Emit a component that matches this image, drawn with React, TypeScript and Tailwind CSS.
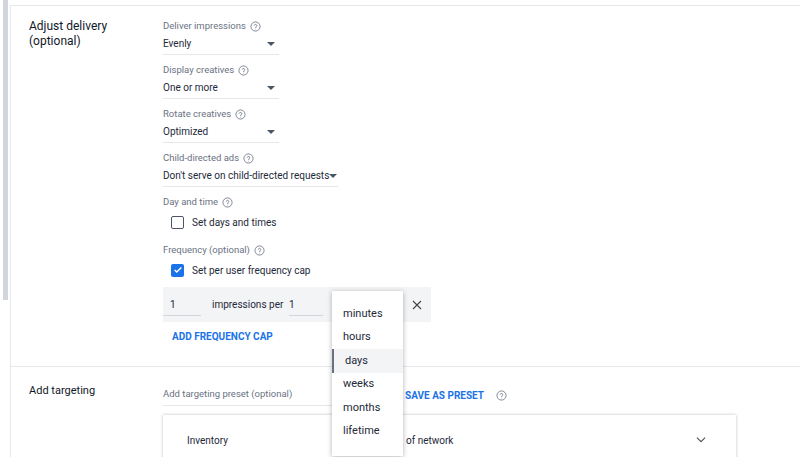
import React from "react";

const Help = () => (
  <svg width="11" height="11" viewBox="0 0 24 24" className="inline-block ml-1 text-gray-500" fill="none" stroke="currentColor" strokeWidth="1.8">
    <circle cx="12" cy="12" r="10" />
    <path d="M9.2 9.3a2.9 2.9 0 0 1 5.6 1c0 1.9-2.8 2.4-2.8 4.2" strokeLinecap="round" />
    <circle cx="12" cy="17.6" r="0.9" fill="currentColor" stroke="none" />
  </svg>
);

const Caret = () => <span className="w-0 h-0 border-l-[4px] border-r-[4px] border-t-[4px] border-l-transparent border-r-transparent border-t-gray-600" />;

const Field = ({ label, value, w }: { label: string; value: string; w: string }) => (
  <div className="flex flex-col">
    <div className="text-[9.5px] text-gray-500 flex items-center h-[14px]">{label}<Help /></div>
    <div className={`${w} flex items-center justify-between h-[22px] border-b border-gray-200 text-[10px] text-gray-800 pr-[4px] whitespace-nowrap`}>
      <span>{value}</span><Caret />
    </div>
  </div>
);

export default function App() {
  return (
    <div className="relative w-[800px] h-[457px] overflow-hidden bg-white" style={{ fontFamily: "Roboto, 'Liberation Sans', sans-serif" }}>
      <div className="absolute left-[3px] top-0 w-[5px] h-[300px] bg-gray-300" />
      <div className="ml-[10px] mt-[5px] border-t border-l border-gray-200 h-[452px]">
        <div className="flex h-[361px] border-b border-gray-200">
          <div className="w-[152px] pl-[18px] pt-[13px] text-[12px] leading-[15px] text-gray-900">Adjust delivery<br />(optional)</div>
          <div className="pt-[13px] flex flex-col gap-[8px]">
            <Field label="Deliver impressions" value="Evenly" w="w-[116px]" />
            <Field label="Display creatives" value="One or more" w="w-[116px]" />
            <Field label="Rotate creatives" value="Optimized" w="w-[116px]" />
            <Field label="Child-directed ads" value="Don't serve on child-directed requests" w="w-[175px]" />
            <div>
              <div className="text-[9.5px] text-gray-500 flex items-center h-[14px]">Day and time<Help /></div>
              <div className="flex items-center gap-[8px] pl-[8px] h-[26px] text-[10px] text-gray-800">
                <span className="w-[13px] h-[13px] border-[1.5px] border-gray-600 rounded-[2px]" />Set days and times
              </div>
            </div>
            <div>
              <div className="text-[9.5px] text-gray-500 flex items-center h-[14px]">Frequency (optional)<Help /></div>
              <div className="flex items-center gap-[8px] pl-[8px] h-[26px] text-[10px] text-gray-800">
                <span className="w-[13px] h-[13px] bg-[#1a73e8] rounded-[2px] flex items-center justify-center">
                  <svg width="10" height="10" viewBox="0 0 24 24" fill="none" stroke="white" strokeWidth="3.5"><path d="M4 12l5 5L20 6" /></svg>
                </span>Set per user frequency cap
              </div>
              <div className="mt-[4px] w-[268px] h-[35px] bg-gray-100 flex items-center text-[10px] text-gray-800">
                <div className="w-[38px] pl-[7px] h-[22px] flex items-center border-b border-gray-300">1</div>
                <div className="ml-[11px] w-[77px]">impressions per</div>
                <div className="w-[34px] h-[22px] flex items-center border-b border-gray-300">1</div>
                <svg className="ml-[88px]" width="12" height="12" viewBox="0 0 24 24" stroke="#444" strokeWidth="2.2"><path d="M4 4l16 16M20 4L4 20" /></svg>
              </div>
              <div className="mt-[7px] pl-[9px] text-[10px] font-bold text-[#1a73e8]">ADD FREQUENCY CAP</div>
            </div>
          </div>
        </div>
        <div className="flex">
          <div className="w-[152px] pl-[18px] pt-[16px] text-[11px] text-gray-900">Add targeting</div>
          <div className="pt-[17px]">
            <div className="flex items-center">
              <div className="w-[240px] h-[22px] border-b border-gray-200 text-[9.5px] text-gray-500 flex items-center">Add targeting preset (optional)</div>
              <div className="ml-[2px] text-[10px] font-bold text-[#1a73e8] flex items-center">SAVE AS PRESET<span className="ml-[8px]"><Help /></span></div>
            </div>
            <div className="mt-[9px] w-[573px] h-[50px] shadow-[0_0_3px_rgba(0,0,0,0.25)] flex items-center text-[10px] text-gray-800">
              <span className="ml-[24px] w-[219px]">Inventory</span>
              <span className="flex-1">of network</span>
              <svg className="mr-[28px]" width="14" height="14" viewBox="0 0 24 24" fill="none" stroke="#555" strokeWidth="2"><path d="M5 8l7 7 7-7" /></svg>
            </div>
          </div>
        </div>
      </div>
      <div className="absolute left-[332px] top-[291px] w-[71px] h-[165px] bg-white shadow-[0_1px_5px_rgba(0,0,0,0.3)] pt-[11px] text-[11px] text-gray-800">
        {["minutes", "hours", "days", "weeks", "months", "lifetime"].map((t) => (
          <div key={t} className={`h-[23.5px] flex items-center pl-[11px] ${t === "days" ? "bg-gray-100 border-l-2 border-gray-500 pl-[9px]" : ""}`}>{t}</div>
        ))}
      </div>
    </div>
  );
}
